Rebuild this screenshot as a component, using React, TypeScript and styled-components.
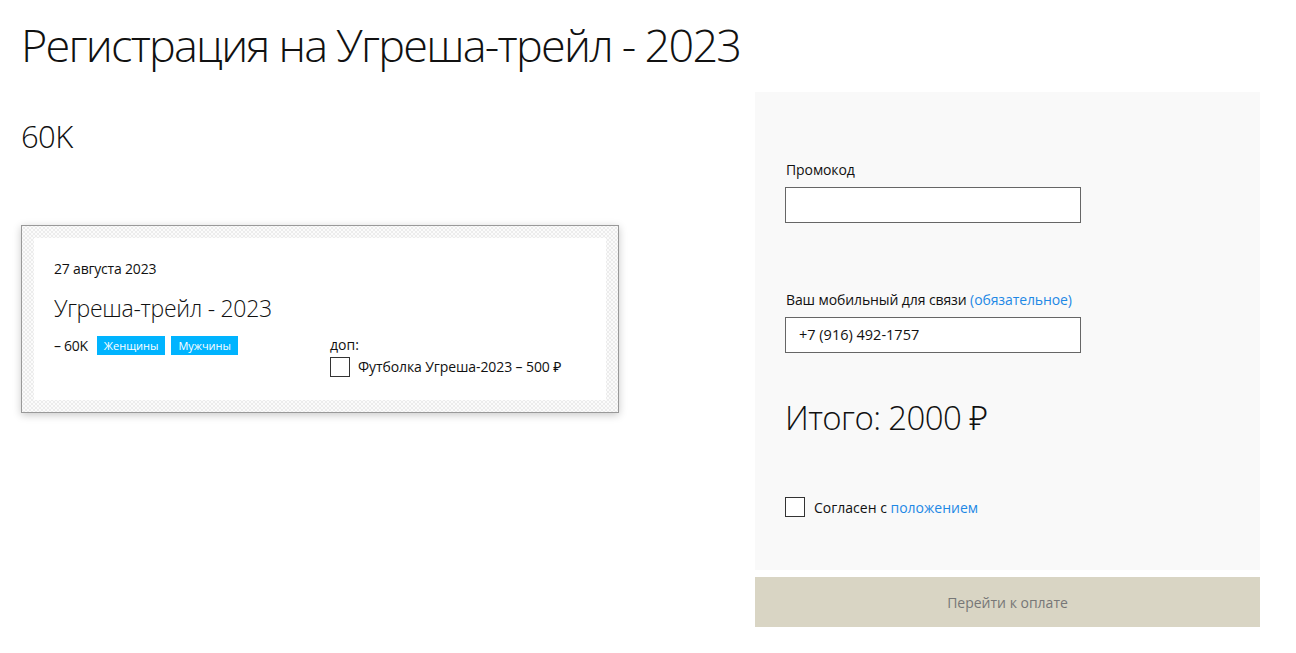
import React from "react";
import styled, { createGlobalStyle } from "styled-components";

const Global = createGlobalStyle`
  html, body { margin: 0; padding: 0; background: #fff; }
  body { font-family: "Open Sans", "Noto Sans", sans-serif; color: #111; }
  * { box-sizing: border-box; }
`;

const Page = styled.div`
  padding: 0 0 0 21px;
  width: 1296px;
`;

const Title = styled.h1`
  margin: 0;
  padding-top: 14px;
  height: 92px;
  font-weight: 300;
  font-size: 45px;
  line-height: 62px;
  letter-spacing: -1.75px;
  color: #111;
`;

const Columns = styled.div`
  display: grid;
  grid-template-columns: 734px 505px;
  align-items: start;
`;

const Left = styled.div`
  display: flex;
  flex-direction: column;
`;

const Distance = styled.div`
  margin-top: 24px;
  font-size: 31px;
  font-weight: 300;
  line-height: 40px;
  letter-spacing: -0.6px;
`;

const Card = styled.div`
  margin-top: 69px;
  width: 598px;
  height: 188px;
  border: 1px solid #999;
  box-shadow: 0 2px 8px rgba(0, 0, 0, 0.22);
  padding: 12px;
  background-color: #fbfbfb;
  background-image: linear-gradient(45deg, transparent 40%, #ececec 40% 60%, transparent 60%),
    linear-gradient(-45deg, transparent 40%, #ececec 40% 60%, transparent 60%);
  background-size: 4px 4px;
`;

const CardInner = styled.div`
  background: #fff;
  height: 100%;
  padding: 22px 20px 0 20px;
`;

const DateText = styled.div`
  font-size: 14px;
  line-height: 18px;
  letter-spacing: -0.2px;
`;

const EventName = styled.div`
  margin-top: 15px;
  font-size: 23px;
  font-weight: 300;
  line-height: 30px;
  letter-spacing: -0.3px;
`;

const CardRow = styled.div`
  margin-top: 12px;
  display: grid;
  grid-template-columns: 276px 1fr;
`;

const Tags = styled.div`
  display: flex;
  align-items: center;
  gap: 6px;
  height: 20px;
  font-size: 14px;
  letter-spacing: -0.3px;
`;

const Lead = styled.span`
  margin-right: 3px;
`;

const Tag = styled.span`
  background: #00b4ff;
  color: #fff;
  font-size: 11px;
  line-height: 19px;
  padding: 0 7px;
  letter-spacing: 0;
`;

const Extras = styled.div`
  display: flex;
  flex-direction: column;
  margin-top: 1px;
  font-size: 14px;
  line-height: 18px;
`;

const CheckRow = styled.label`
  display: flex;
  align-items: center;
  gap: 8px;
  margin-top: 3px;
  font-size: 14px;
  letter-spacing: -0.1px;
`;

const Box = styled.span`
  width: 20px;
  height: 20px;
  border: 1px solid #333;
  background: #fff;
  flex: none;
`;

const Right = styled.div`
  display: flex;
  flex-direction: column;
  gap: 7px;
`;

const Panel = styled.div`
  background: #f9f9f9;
  height: 478px;
  padding: 68px 30px 0 30px;
`;

const Field = styled.div<{ $gap?: number }>`
  display: flex;
  flex-direction: column;
  gap: 7px;
  margin-top: ${(p) => p.$gap ?? 0}px;
`;

const Label = styled.div`
  font-size: 14px;
  line-height: 20px;
  padding-left: 1px;
  letter-spacing: -0.1px;
`;

const Link = styled.span`
  color: #1e88e5;
`;

const Input = styled.div`
  width: 296px;
  height: 36px;
  border: 1px solid #666;
  background: #fff;
  font-size: 14.5px;
  line-height: 34px;
  padding-left: 13px;
`;

const Total = styled.div`
  margin-top: 43px;
  font-size: 33px;
  font-weight: 300;
  line-height: 44px;
  letter-spacing: -0.6px;
`;

const Agree = styled.label`
  margin-top: 57px;
  display: flex;
  align-items: center;
  gap: 9px;
  font-size: 14px;
`;

const PayButton = styled.button`
  height: 50px;
  border: none;
  background: #d9d5c4;
  color: #777;
  font-family: inherit;
  font-size: 14px;
`;

export default function App() {
  return (
    <Page>
      <Global />
      <Title>Регистрация на Угреша-трейл - 2023</Title>
      <Columns>
        <Left>
          <Distance>60K</Distance>
          <Card>
            <CardInner>
              <DateText>27 августа 2023</DateText>
              <EventName>Угреша-трейл - 2023</EventName>
              <CardRow>
                <Tags>
                  <Lead>– 60K</Lead>
                  <Tag>Женщины</Tag>
                  <Tag>Мужчины</Tag>
                </Tags>
                <Extras>
                  <span>доп:</span>
                  <CheckRow>
                    <Box />
                    <span>Футболка Угреша-2023 – 500 ₽</span>
                  </CheckRow>
                </Extras>
              </CardRow>
            </CardInner>
          </Card>
        </Left>
        <Right>
          <Panel>
            <Field>
              <Label>Промокод</Label>
              <Input />
            </Field>
            <Field $gap={67}>
              <Label>
                Ваш мобильный для связи <Link>(обязательное)</Link>
              </Label>
              <Input>+7 (916) 492-1757</Input>
            </Field>
            <Total>Итого: 2000 ₽</Total>
            <Agree>
              <Box />
              <span>
                Согласен с <Link>положением</Link>
              </span>
            </Agree>
          </Panel>
          <PayButton>Перейти к оплате</PayButton>
        </Right>
      </Columns>
    </Page>
  );
}
